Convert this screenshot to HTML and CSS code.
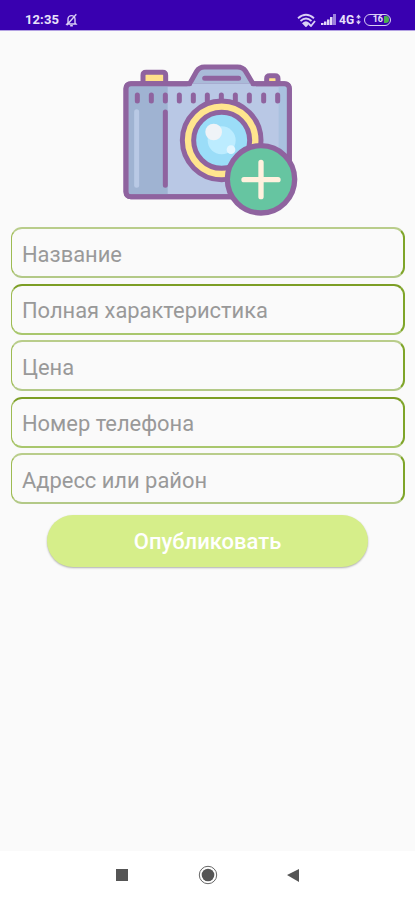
FILE: index.html
```html
<!DOCTYPE html>
<html lang="ru">
<head>
<meta charset="utf-8">
<title>Объявление</title>
<link rel="stylesheet" href="styles.css">
</head>
<body>
<div class="screen">
  <header class="status">
    <span class="time">12:35</span>
    <svg class="bell" viewBox="0 0 14 16"><path d="M3 11.5V7a4 4 0 0 1 8 0v4.500l1 1H2zM5.500 14.500h3M12.500 1.500L1.500 14"/></svg>
    <svg class="wifi" viewBox="0 0 19 14"><path d="M1 5.200Q9 -1.800 17 5.200M3.500 8Q9 3 14.500 8M6.200 10.500Q9 8 11.500 10.500"/><path d="M9 13l-2-2h4z"/><path d="M12 11l2 2 4-5"/></svg>
    <svg class="signal" viewBox="0 0 15 11"><path d="M0 11V9h2.500v2zM3 11V7.500h2.500V11zM6 11V5.500h2.500V11zM9 11V3h2.500v8z"/><path class="dim" d="M12 11V0h3v11z"/></svg>
    <span class="net">4G</span>
    <svg class="data" viewBox="0 0 6 12"><path d="M3 0l3 3.500H4v1.500H2V3.500H0zM3 12l3-3.500H4V7H2v1.500H0z"/></svg>
    <span class="battery"><span class="level">16</span><span class="charge"></span></span>
  </header>
  <main class="form">
    <svg class="camera" viewBox="0 0 600 510">
      <g stroke="#8f639f" stroke-width="15" stroke-linejoin="round" stroke-linecap="round">
        <path fill="#ffe18b" d="M99 86V61q0-9 9-9h50q9 0 9 9v25z"/>
        <path fill="#ffe18b" d="M470 86V71q0-9 9-9h16q9 0 9 9v15z"/>
        <rect x="48" y="86" width="490" height="339" rx="15" fill="#b9c8e5"/>
        <path stroke="none" fill="#9fb3d2" d="M55 93h118v325H55z"/>
        <path stroke="none" fill="#a9c1df" d="M506 93h25v325h-25z"/>
        <path fill="#a9bad8" d="M239 86L260 49q8-13 23-13H382q17 0 25 13L429 86"/>
        <path stroke="none" fill="#b9c8e5" d="M232 86h206v14H232z"/>
        <path fill="none" d="M63 86H239M429 86H523q15 0 15 15V410q0 15-15 15H63q-15 0-15-15V101q0-15 15-15"/>
        <path fill="none" d="M284 70H386M82 120v18M124 120v18M166 120v18M208 120v18M250 120v18M292 120v18M334 120v18M376 120v18M418 120v18M461 120v18M503 120v18M166 171V391"/>
        <path fill="none" stroke="#b9c9e5" d="M80 170V391"/>
        <circle cx="335" cy="256" r="118" fill="#ffe58e"/>
        <circle cx="335" cy="256" r="84" fill="#9bddf8"/>
      </g>
      <circle cx="335" cy="256" r="42" fill="#bcecff"/>
      <circle cx="311" cy="231" r="25" fill="#eff3f7"/>
      <circle cx="363" cy="284" r="13" fill="#e4f6ff"/>
      <circle cx="453" cy="373" r="101" fill="#66c5a1" stroke="#8f639f" stroke-width="16"/>
      <path d="M453 322V425M402 374H504" stroke="#fff1de" stroke-width="16" stroke-linecap="round"/>
    </svg>
    <div class="fields">
      <div class="field soft">Название</div>
      <div class="field">Полная характеристика</div>
      <div class="field soft">Цена</div>
      <div class="field">Номер телефона</div>
      <div class="field soft">Адресс или район</div>
    </div>
    <div class="submit" role="button">Опубликовать</div>
  </main>
  <nav class="nav">
    <svg viewBox="0 0 20 20"><path d="M4 4h12v12H4z"/></svg>
    <svg viewBox="0 0 20 20"><circle cx="10" cy="10" r="6.300"/><circle class="ring" cx="10" cy="10" r="8.700"/></svg>
    <svg viewBox="0 0 20 20"><path d="M4 10L16 4v13z"/></svg>
  </nav>
</div>
</body>
</html>
```

FILE: styles.css
```css
* {
  box-sizing: border-box;
}

body {
  margin: 0;
  font-family: Roboto, "Liberation Sans", sans-serif;
}

.screen {
  width: 415px;
  height: 900px;
  display: flex;
  flex-direction: column;
  background: #fafafa;
  overflow: hidden;
}

.status {
  height: 30px;
  flex: none;
  display: flex;
  align-items: center;
  padding: 9px 24px 0 25px;
  background: #3900b0;
  box-shadow: 0 1px 0 #b3a1e2;
  color: #e9e2fa;
  font-size: 13px;
  font-weight: 700;
}

.time {
  width: 35px;
  letter-spacing: 0.1px;
}

.bell {
  width: 13px;
  height: 14px;
  margin-left: 5px;
  fill: none;
  stroke: #d9cff5;
  stroke-width: 1.6;
}

.wifi {
  width: 19px;
  height: 14px;
  margin-left: auto;
  fill: none;
  stroke: #d9cff5;
  stroke-width: 1.8;
}

.signal {
  width: 15px;
  height: 11px;
  margin-left: 5px;
  fill: #e3daf8;
}

.signal .dim {
  fill: #9d82dc;
}

.net {
  width: 17px;
  margin-left: 3px;
  font-size: 12px;
}

.data {
  width: 5px;
  height: 11px;
  margin: 0 3px 0 0;
  fill: #d9cff5;
}

.battery {
  width: 27px;
  height: 12px;
  display: flex;
  align-items: center;
  justify-content: flex-end;
  border: 1.5px solid #d9cff5;
  border-radius: 6px;
  overflow: hidden;
}

.level {
  font-size: 9px;
  line-height: 9px;
}

.charge {
  width: 5px;
  height: 7px;
  margin: 0 1px;
  border-radius: 0 3px 3px 0;
  background: #4caf50;
}

.form {
  flex: 1;
  display: flex;
  flex-direction: column;
  align-items: center;
  padding: 25px 10px 0 11px;
}

.camera {
  width: 200px;
  height: 170px;
  flex: none;
  margin-left: 4px;
}

.fields {
  width: 100%;
  display: grid;
  grid-auto-rows: 51px;
  gap: 5.6px;
  margin-top: 2px;
}

.field {
  display: flex;
  align-items: center;
  padding: 3px 10px 0;
  border-style: solid;
  border-width: 2px 2px 2px 1px;
  border-color: #7c9e25 #7fa529 #a9c76d #9dbb52;
  border-radius: 11px;
  color: #999;
  font-size: 21.9px;
  white-space: nowrap;
}

.field.soft {
  border-color: #b9cd8b #7fa529 #b3c987 #9dbb52;
}

.submit {
  width: 321px;
  height: 52px;
  display: flex;
  align-items: center;
  justify-content: center;
  margin: 11px 1px 0 0;
  border-radius: 26px;
  background: #d6ee8a;
  box-shadow: 0 1px 2px rgba(0, 0, 0, 0.3);
  color: #fff;
  font-size: 22px;
  font-weight: 500;
}

.nav {
  height: 49px;
  flex: none;
  display: flex;
  justify-content: center;
  align-items: center;
  gap: 65.500px;
  padding-bottom: 1px;
  background: #fff;
}

.nav svg {
  width: 20px;
  height: 20px;
  fill: #555;
}

.nav .ring {
  fill: none;
  stroke: #666;
  stroke-width: 1;
}
```
